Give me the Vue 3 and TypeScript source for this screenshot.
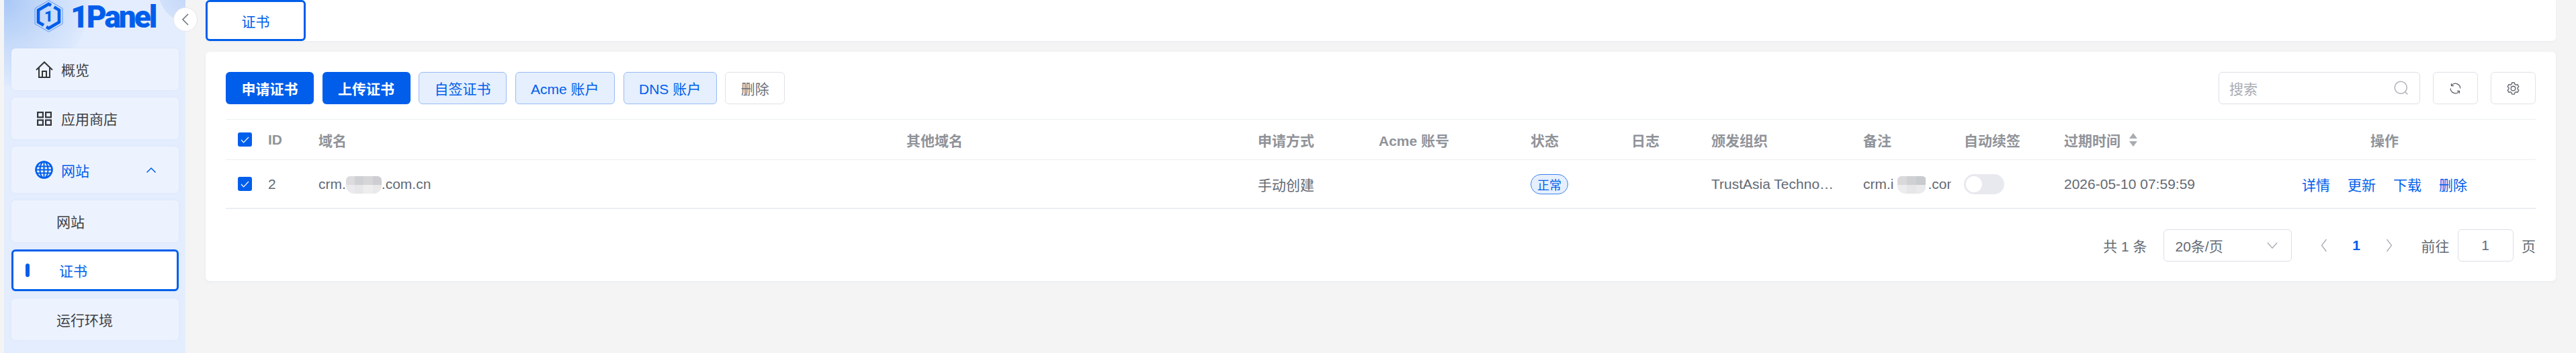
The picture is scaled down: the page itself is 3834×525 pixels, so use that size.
<template>
  <div class="layout">
    <aside class="sidebar">
      <div class="logo">
        <svg class="logo-mark" width="43" height="48" viewBox="0 0 43 48" fill="none">
          <path d="M21.5 0.7 42 12.5V35.5L21.5 47.3 1 35.5V12.5Z" stroke="#5b96f2" stroke-width="1" />
          <path d="M25 8 21.5 6 6 15V33L14 37.6" stroke="#005eeb" stroke-width="4.6" />
          <path d="M29.5 10.6 37 15V33L21.5 42 18 40" stroke="#005eeb" stroke-width="4.6" />
          <text x="21.5" y="32" text-anchor="middle" class="logo-one">1</text>
        </svg>
        <span class="logo-text">1Panel</span>
      </div>
      <button class="collapse" type="button" aria-label="collapse">
        <svg width="12" height="20" viewBox="0 0 12 20" fill="none"><path d="M10 2 2 10l8 8" stroke="#6b7078" stroke-width="1.5" /></svg>
      </button>

      <nav class="menu">
        <a class="menu-item">
          <span class="menu-icon">
            <svg width="26" height="25" viewBox="0 0 26 25" fill="none" stroke="#33363b" stroke-width="2">
              <path d="M1 13 13 1.5 25 13" />
              <path d="M5 10V24H21V10" />
              <path d="M10 24V15H16V24" />
            </svg>
          </span>
          概览
        </a>
        <a class="menu-item">
          <span class="menu-icon">
            <svg width="22" height="21" viewBox="0 0 22 21" fill="none" stroke="#33363b" stroke-width="2.2">
              <rect x="1.1" y="1.1" width="7.8" height="7.3" />
              <rect x="13.1" y="1.1" width="7.8" height="7.3" />
              <rect x="1.1" y="12.6" width="7.8" height="7.3" />
              <rect x="13.1" y="12.6" width="7.8" height="7.3" />
            </svg>
          </span>
          应用商店
        </a>
        <a class="menu-item is-open">
          <span class="menu-icon">
            <svg width="27" height="27" viewBox="0 0 27 27" fill="none" stroke="#005eeb" stroke-width="2">
              <circle cx="13.5" cy="13.5" r="12" stroke-width="2.6" />
              <ellipse cx="13.5" cy="13.5" rx="6" ry="12" />
              <path d="M13.5 1.5V25.5M3 8.5H24M1.5 13.5H25.5M3 18.5H24" />
            </svg>
          </span>
          网站
          <svg class="menu-arrow" width="16" height="10" viewBox="0 0 16 10" fill="none"><path d="M1.5 8.5 8 2l6.5 6.5" stroke="#005eeb" stroke-width="1.5" /></svg>
        </a>
        <a class="menu-item is-sub">网站</a>
        <a class="menu-item is-sub is-active"><i class="active-bar"></i>证书</a>
        <a class="menu-item is-sub">运行环境</a>
      </nav>
    </aside>

    <main class="main">
      <div class="tabs">
        <div class="tab">证书</div>
      </div>

      <section class="card">
        <div class="toolbar">
          <div class="toolbar-left">
            <button v-for="b in buttons" :key="b.label" class="btn" :class="b.kind" type="button">{{ b.label }}</button>
          </div>
          <div class="toolbar-right">
            <div class="search">
              <span class="search-text">搜索</span>
              <svg width="24" height="24" viewBox="0 0 1024 1024" fill="#b4b7bd"><path d="m795.904 750.72 124.992 124.928a32 32 0 0 1-45.248 45.248L750.656 795.904a416 416 0 1 1 45.248-45.248zM480 832a352 352 0 1 0 0-704 352 352 0 0 0 0 704z" /></svg>
            </div>
            <button class="icon-btn" type="button" aria-label="refresh">
              <svg width="21" height="21" viewBox="0 0 1024 1024" fill="#5f646c"><path d="M771.776 794.88A384 384 0 0 1 128 512h64a320 320 0 0 0 555.712 216.448H654.72a32 32 0 1 1 0-64h149.056a32 32 0 0 1 32 32v148.928a32 32 0 1 1-64 0v-50.56zM276.288 295.616h92.992a32 32 0 0 1 0 64H220.16a32 32 0 0 1-32-32V178.56a32 32 0 0 1 64 0v50.56A384 384 0 0 1 896.128 512h-64a320 320 0 0 0-555.776-216.384z" /></svg>
            </button>
            <button class="icon-btn" type="button" aria-label="settings">
              <svg width="21" height="21" viewBox="0 0 1024 1024" fill="#5f646c"><path d="M600.704 64a32 32 0 0 1 30.464 22.208l35.2 109.376c14.784 7.232 28.928 15.36 42.432 24.512l112.384-24.192a32 32 0 0 1 34.432 15.36L944.32 364.8a32 32 0 0 1-4.032 37.504l-77.12 85.12a357.12 357.12 0 0 1 0 49.024l77.12 85.248a32 32 0 0 1 4.032 37.504l-88.704 153.6a32 32 0 0 1-34.432 15.296L708.8 803.904c-13.44 9.088-27.648 17.28-42.368 24.512l-35.264 109.376A32 32 0 0 1 600.704 960H423.296a32 32 0 0 1-30.464-22.208L357.696 828.48a351.616 351.616 0 0 1-42.56-24.64l-112.32 24.256a32 32 0 0 1-34.432-15.36L79.68 659.2a32 32 0 0 1 4.032-37.504l77.12-85.248a357.12 357.12 0 0 1 0-48.896l-77.12-85.248A32 32 0 0 1 79.68 364.8l88.704-153.6a32 32 0 0 1 34.432-15.296l112.32 24.256c13.568-9.152 27.776-17.408 42.56-24.64l35.2-109.312A32 32 0 0 1 423.232 64H600.64zm-23.424 64H446.72l-36.352 113.088-24.512 11.968a294.113 294.113 0 0 0-34.816 20.096l-22.656 15.36-116.224-25.088-65.28 113.152 79.68 88.192-1.92 27.136a293.12 293.12 0 0 0 0 40.192l1.92 27.136-79.808 88.192 65.344 113.152 116.224-25.024 22.656 15.296a294.113 294.113 0 0 0 34.816 20.096l24.512 11.968L446.72 896h130.688l36.48-113.152 24.448-11.904a288.282 288.282 0 0 0 34.752-20.096l22.592-15.296 116.288 25.024 65.28-113.152-79.744-88.192 1.92-27.136a293.12 293.12 0 0 0 0-40.256l-1.92-27.136 79.808-88.128-65.344-113.152-116.288 24.96-22.592-15.232a287.616 287.616 0 0 0-34.752-20.096l-24.448-11.904L577.344 128zM512 320a192 192 0 1 1 0 384 192 192 0 0 1 0-384zm0 64a128 128 0 1 0 0 256 128 128 0 0 0 0-256z" /></svg>
            </button>
          </div>
        </div>

        <div class="table">
          <div class="t-row t-head">
            <span class="check"><svg width="13" height="10" viewBox="0 0 13 10" fill="none"><path d="M1 5l3.6 3.800L12 1" stroke="#fff" stroke-width="1.2" /></svg></span>
            <span>ID</span>
            <span>域名</span>
            <span>其他域名</span>
            <span>申请方式</span>
            <span>Acme 账号</span>
            <span>状态</span>
            <span>日志</span>
            <span>颁发组织</span>
            <span>备注</span>
            <span>自动续签</span>
            <span class="sortable">
              过期时间
              <svg width="14" height="20" viewBox="0 0 14 20" fill="#a8abb2"><path d="M7 0l6 8H1zM7 20l-6-8h12z" /></svg>
            </span>
            <span class="op-head">操作</span>
          </div>
          <div class="t-row t-body">
            <span class="check"><svg width="13" height="10" viewBox="0 0 13 10" fill="none"><path d="M1 5l3.6 3.800L12 1" stroke="#fff" stroke-width="1.2" /></svg></span>
            <span>2</span>
            <span class="cell-inline">crm.<i class="mosaic mosaic-domain"><b v-for="c in mosaicCells" :key="c" :style="{ background: c }"></b></i>.com.cn</span>
            <span></span>
            <span>手动创建</span>
            <span></span>
            <span><em class="tag">正常</em></span>
            <span></span>
            <span class="ellipsis">TrustAsia Technologies, Inc.</span>
            <span class="cell-inline clip">crm.i<i class="mosaic mosaic-note"><b v-for="c in mosaicNote" :key="c" :style="{ background: c }"></b></i>.com.cn</span>
            <span><i class="switch"><b></b></i></span>
            <span>2026-05-10 07:59:59</span>
            <span class="ops"><a v-for="op in ops" :key="op">{{ op }}</a></span>
          </div>
        </div>

        <div class="pagination">
          <span>共 1 条</span>
          <div class="page-select">
            20条/页
            <svg width="16" height="10" viewBox="0 0 16 10" fill="none"><path d="M1 1l7 8 7-8" stroke="#a8abb2" stroke-width="1.3" /></svg>
          </div>
          <div class="pager">
            <svg width="10" height="20" viewBox="0 0 10 20" fill="none"><path d="M8.5 1 1.5 10l7 9" stroke="#a8abb2" stroke-width="1.3" /></svg>
            <b>1</b>
            <svg width="10" height="20" viewBox="0 0 10 20" fill="none"><path d="M1.5 1l7 9-7 9" stroke="#a8abb2" stroke-width="1.3" /></svg>
          </div>
          <span>前往</span>
          <div class="page-input">1</div>
          <span class="page-unit">页</span>
        </div>
      </section>
    </main>
  </div>
</template>

<script setup lang="ts">
interface ToolbarButton {
  label: string;
  kind: 'primary' | 'light' | 'plain';
}

const buttons: ToolbarButton[] = [
  { label: '申请证书', kind: 'primary' },
  { label: '上传证书', kind: 'primary' },
  { label: '自签证书', kind: 'light' },
  { label: 'Acme 账户', kind: 'light' },
  { label: 'DNS 账户', kind: 'light' },
  { label: '删除', kind: 'plain' },
];

const ops = ['详情', '更新', '下载', '删除'];

// pixelated cover over the hidden part of the domain
const mosaicCells = ['#dcdcdf', '#cfd0d3', '#d6d6d9', '#cdced2', '#ebebed', '#e7e7e9', '#eeeeef', '#e9e9eb'];
const mosaicNote = ['#d9d9dc', '#cfd0d3', '#c9cacd', '#ececee', '#e6e6e8', '#eaeaec'];
</script>

<style scoped>
.layout {
  display: flex;
  width: 3834px;
  height: 525px;
  padding-left: 6px;
  box-sizing: border-box;
  overflow: hidden;
  background: #f4f4f5;
  font-family: "Liberation Sans", "Noto Sans CJK SC", sans-serif;
  font-size: 21px;
  color: #646a73;
}

.sidebar {
  position: relative;
  flex: 0 0 270px;
  box-sizing: border-box;
  background:
    radial-gradient(circle 50px at 279px -15px, #bfd4f8 0, #d2e1fb 99%, transparent 100%),
    radial-gradient(circle 128px at 0 0, #a9c8f6 0, #c6daf9 50%, #deeafd 99%, transparent 100%),
    #e3edfd;
}

.logo {
  display: flex;
  align-items: flex-start;
  height: 72px;
  padding-left: 45px;
  box-sizing: border-box;
}

.logo-one {
  font-family: "Roboto", sans-serif;
  font-size: 22px;
  font-weight: 900;
  fill: #005eeb;
}

.logo-text {
  margin-left: 11px;
  font-family: "Roboto", sans-serif;
  font-size: 46px;
  line-height: 50px;
  font-weight: 900;
  letter-spacing: -3px;
  color: #005eeb;
}

.collapse {
  position: absolute;
  top: 11px;
  left: 252px;
  z-index: 2;
  display: flex;
  align-items: center;
  justify-content: center;
  width: 36px;
  height: 36px;
  padding: 0;
  border: 1px solid #e4e7ed;
  border-radius: 50%;
  background: #fff;
}

.menu {
  display: flex;
  flex-direction: column;
  gap: 11px;
  padding: 0 10px 0 11px;
}

.menu-item {
  display: flex;
  align-items: center;
  height: 62px;
  padding-left: 35px;
  box-sizing: border-box;
  border-radius: 6px;
  background: #edf3fe;
  color: #3e4045;
  box-shadow: 0 0 4px rgba(0, 94, 235, 0.04);
}

.menu-icon {
  display: flex;
  justify-content: center;
  width: 27px;
  margin-right: 12px;
}

.menu-item.is-open {
  height: 69px;
  color: #005eeb;
}

.menu-arrow {
  margin-left: 84px;
}

.menu-item.is-sub {
  padding-left: 67px;
}

.menu-item.is-active {
  padding-left: 0;
  border: 3px solid #005eeb;
  background: #fff;
  color: #005eeb;
}

.active-bar {
  width: 6px;
  height: 20px;
  margin: 0 44px 0 18px;
  border-radius: 3px;
  background: #005eeb;
}

.main {
  flex: 1;
  min-width: 0;
  padding: 0 30px;
}

.tabs {
  height: 61px;
  margin-bottom: 16px;
  border-radius: 0 0 6px 6px;
  background: #fff;
  box-shadow: 0 1px 3px rgba(30, 60, 120, 0.05);
}

.tab {
  display: flex;
  align-items: center;
  justify-content: center;
  width: 149px;
  height: 61px;
  box-sizing: border-box;
  border: 3px solid #005eeb;
  border-radius: 6px;
  background: #fff;
  color: #005eeb;
}

.card {
  height: 341px;
  padding: 30px 30px 0;
  box-sizing: border-box;
  border-radius: 6px;
  background: #fff;
  box-shadow: 0 1px 4px rgba(30, 60, 120, 0.06);
}

.toolbar {
  display: flex;
  justify-content: space-between;
  height: 48px;
}

.toolbar-left {
  display: flex;
  gap: 12.5px;
}

.btn {
  height: 48px;
  padding: 0 22.5px;
  box-sizing: border-box;
  border: 1.5px solid transparent;
  border-radius: 6px;
  font: inherit;
}

.btn.primary {
  background: #005eeb;
  color: #fff;
  font-weight: 600;
}

.btn.light {
  border-color: #99bcf6;
  background: #e5effd;
  color: #005eeb;
}

.btn.plain {
  border-color: #e0e2e7;
  background: #fff;
  color: #6e7379;
}

.toolbar-right {
  display: flex;
  gap: 19px;
}

.search {
  display: flex;
  align-items: center;
  justify-content: space-between;
  width: 300px;
  height: 48px;
  padding: 0 15px;
  box-sizing: border-box;
  border: 1.5px solid #dcdfe6;
  border-radius: 6px;
}

.search-text {
  color: #a8abb2;
}

.icon-btn {
  display: flex;
  align-items: center;
  justify-content: center;
  width: 67px;
  height: 48px;
  padding: 0;
  border: 1.5px solid #e0e2e7;
  border-radius: 6px;
  background: #fff;
}

.table {
  margin-top: 22px;
  border-top: 1.5px solid #ebedf0;
}

.t-row {
  display: grid;
  grid-template-columns: 63px 75px 875px 523px 180px 226px 150px 119px 226px 150px 149px 253px 448px;
  align-items: center;
  white-space: nowrap;
}

.t-head {
  height: 60px;
  border-bottom: 1.5px solid #ebedf0;
  box-sizing: border-box;
  font-weight: 600;
  color: #909399;
}

.t-body {
  height: 73px;
  border-bottom: 2.5px solid #ebeef3;
  box-sizing: border-box;
}

.check {
  display: flex;
  align-items: center;
  justify-content: center;
  width: 21px;
  height: 21px;
  margin-left: 18px;
  border-radius: 3px;
  background: #005eeb;
}

.sortable {
  display: flex;
  align-items: center;
  gap: 12px;
}

.op-head {
  text-align: center;
}

.cell-inline {
  display: flex;
  align-items: center;
}

.clip {
  width: 131px;
  overflow: hidden;
}

.ellipsis {
  width: 184px;
  overflow: hidden;
  text-overflow: ellipsis;
}

.mosaic {
  display: grid;
  flex: none;
  overflow: hidden;
  margin-top: 3px;
  border-radius: 6px 6px 12px 12px;
}

.mosaic-domain {
  grid-template-columns: repeat(4, 1fr);
  grid-template-rows: 13px 13px;
  width: 53px;
}

.mosaic-note {
  grid-template-columns: repeat(3, 1fr);
  grid-template-rows: 13px 13px;
  width: 43px;
  margin-left: 5px;
  margin-right: 3px;
}

.tag {
  display: inline-flex;
  align-items: center;
  justify-content: center;
  width: 56px;
  height: 30px;
  box-sizing: border-box;
  border: 1.5px solid #3d82ef;
  border-radius: 15px;
  background: #e5effd;
  color: #005eeb;
  font-size: 18px;
  font-style: normal;
}

.switch {
  display: flex;
  align-items: center;
  width: 60px;
  height: 30px;
  padding-left: 3px;
  box-sizing: border-box;
  border-radius: 15px;
  background: #e8e9ee;
}

.switch b {
  width: 24px;
  height: 24px;
  border-radius: 50%;
  background: #fff;
}

.ops {
  display: flex;
  justify-content: center;
  gap: 26px;
  color: #005eeb;
}

.pagination {
  display: flex;
  align-items: center;
  justify-content: flex-end;
  margin-top: 30px;
  height: 48px;
}

.page-select {
  display: flex;
  align-items: center;
  justify-content: space-between;
  width: 191px;
  height: 48px;
  margin: 0 24px;
  padding: 0 20px 0 17px;
  box-sizing: border-box;
  border: 1.5px solid #dcdfe6;
  border-radius: 6px;
}

.pager {
  display: flex;
  align-items: center;
  justify-content: space-between;
  width: 145px;
  margin-right: 24px;
  padding: 0 19px;
  box-sizing: border-box;
}

.pager b {
  color: #005eeb;
}

.page-input {
  display: flex;
  align-items: center;
  justify-content: center;
  width: 83px;
  height: 48px;
  margin-left: 12px;
  box-sizing: border-box;
  border: 1.5px solid #dcdfe6;
  border-radius: 6px;
}

.page-unit {
  margin-left: 12.5px;
}
</style>

<style>
html,
body {
  margin: 0;
  overflow: hidden;
}
</style>
